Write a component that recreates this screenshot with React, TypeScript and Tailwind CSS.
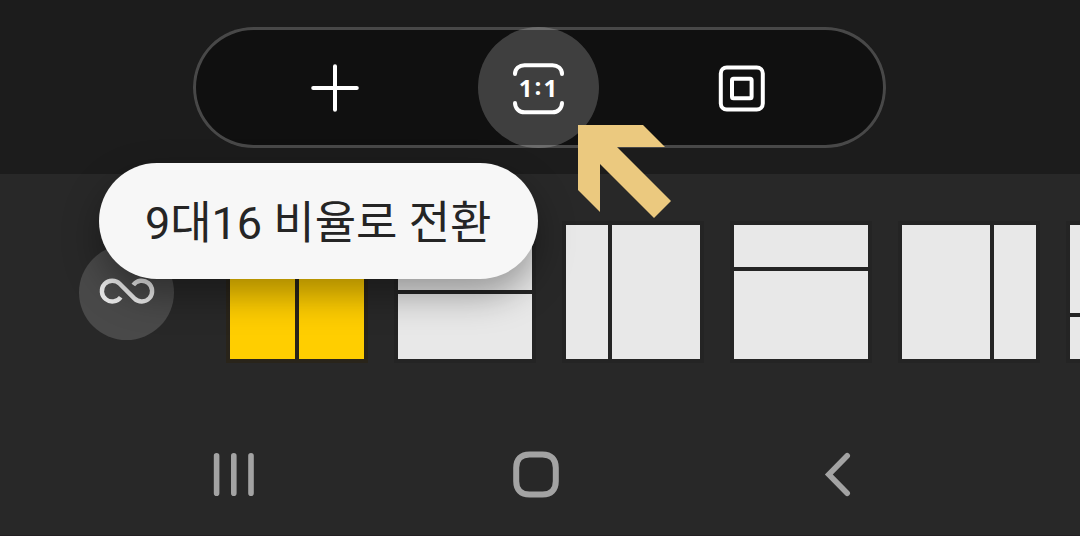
type Layout = {
  name: string;
  grid: string;
};

const layouts: Layout[] = [
  { name: "좌우 균등 분할", grid: "grid-cols-[1fr_1fr]" },
  { name: "상하 균등 분할", grid: "grid-rows-[1fr_1fr]" },
  { name: "좁은 왼쪽 분할", grid: "grid-cols-[42px_1fr]" },
  { name: "좁은 위쪽 분할", grid: "grid-rows-[42px_1fr]" },
  { name: "좁은 오른쪽 분할", grid: "grid-cols-[1fr_42px]" },
  { name: "좁은 아래쪽 분할", grid: "grid-rows-[1fr_42px]" },
];

function PlusIcon() {
  return (
    <svg className="size-14" viewBox="0 0 56 56" fill="none" stroke="white" strokeWidth="4" strokeLinecap="round" aria-hidden="true">
      <path d="M28 6.2V49.8M6.2 28H49.8" />
    </svg>
  );
}

function RatioFrame() {
  return (
    <svg className="size-14" viewBox="0 0 56 56" fill="none" stroke="white" strokeWidth="4" strokeLinecap="round" aria-hidden="true">
      <path d="M5 14C5 8.6 9.4 5.2 14.5 5.2H42.5C47.6 5.2 52 8.6 52 14" />
      <path d="M5 43C5 48.4 9.4 52.3 14.5 52.3H42.5C47.6 52.3 52 48.4 52 43" />
    </svg>
  );
}

function BorderIcon() {
  return (
    <svg className="size-14" viewBox="0 0 56 56" fill="none" stroke="white" strokeWidth="4" aria-hidden="true">
      <rect x="7.8" y="7.5" width="42" height="42" rx="6" />
      <rect x="19" y="18.7" width="19.6" height="19.6" rx="1.5" />
    </svg>
  );
}

function InfinityIcon() {
  return (
    <svg className="h-8 w-[60px]" viewBox="-30 -16 60 32" fill="none" stroke="#e8e8e8" strokeWidth="4.4" aria-hidden="true">
      <path d="M-6.3 5.2A10.4 10.4 0 1 1 -7.3 -8.2L7.3 6.4A10.4 10.4 0 1 0 6.3 -7" />
    </svg>
  );
}

export default function App() {
  return (
    <div className="flex min-h-screen flex-col overflow-hidden border-b border-[#231f22] bg-[#282828] font-['Roboto','Noto_Sans_CJK_KR',sans-serif]">
      <header className="relative z-10 flex justify-center bg-[#1c1c1c] pt-[27px] pr-0.5 pb-[26px]">
        <div className="flex w-[693px] max-w-full justify-evenly rounded-full bg-[#101010] pr-0.5 inset-ring-3 inset-ring-[#484848]">
          <button type="button" aria-label="추가" className="flex size-[121px] items-center justify-center rounded-full">
            <PlusIcon />
          </button>
          <div className="relative">
            <button
              type="button"
              aria-describedby="ratio-tip"
              className="relative flex size-[121px] items-center justify-center rounded-full bg-white/20 font-['Open_Sans',sans-serif] text-2xl leading-none font-bold text-white"
            >
              <RatioFrame />
              <span className="absolute inset-0 flex items-center justify-center gap-0.5">
                <span>1</span>
                <span className="pb-1">:</span>
                <span>1</span>
              </span>
            </button>
            <div
              id="ratio-tip"
              role="tooltip"
              className="absolute top-[136px] right-[61px] flex h-[116px] items-center rounded-full bg-[#f7f7f7] px-[46px] pt-1 text-[45px] leading-none whitespace-nowrap text-[#252525] shadow-[0_16px_36px_rgba(0,0,0,0.35)]"
            >
              9대16 비율로 전환
            </div>
            <svg className="absolute top-[98px] left-[100px] size-[93px]" viewBox="0 0 93 93" aria-hidden="true">
              <path fill="#ebc97f" d="M0 0H65L87 22H39L93 76L76 93L22 39V87L0 65Z" />
            </svg>
          </div>
          <button type="button" aria-label="테두리" className="flex size-[121px] items-center justify-center rounded-full">
            <BorderIcon />
          </button>
        </div>
      </header>

      <main className="flex items-center gap-[52px] overflow-hidden pt-[47px] pb-16 pl-[79px]">
        <button type="button" aria-label="자유 비율" className="flex size-[95px] shrink-0 items-center justify-center rounded-full bg-[#494949]">
          <InfinityIcon />
        </button>
        <div className="flex gap-[26px]">
          {layouts.map((layout, i) => (
            <button
              key={layout.name}
              type="button"
              aria-label={layout.name}
              aria-pressed={i === 0}
              className={`grid size-[142px] shrink-0 gap-1 p-1 ${layout.grid} ${
                i === 0 ? "bg-[#29241a] text-[#ffce00]" : "bg-[#242424] text-[#e8e8e8]"
              }`}
            >
              <span className="bg-current" />
              <span className="bg-current" />
            </button>
          ))}
        </div>
      </main>

      <nav className="flex justify-center pr-2 pb-3">
        <button type="button" aria-label="최근 앱" className="flex h-24 w-[28.2%] items-center justify-center">
          <svg className="size-12" viewBox="0 0 48 48" fill="none" stroke="#a3a3a3" strokeWidth="5.6" strokeLinecap="round" aria-hidden="true">
            <path d="M6.6 4.8V42.2M23.8 4.8V42.2M41 4.8V42.2" />
          </svg>
        </button>
        <button type="button" aria-label="홈" className="flex h-24 w-[28.2%] items-center justify-center">
          <svg className="size-12" viewBox="0 0 48 48" fill="none" stroke="#a3a3a3" strokeWidth="6" aria-hidden="true">
            <path d="M17.5 3.4H30.5C39 3.4 43.8 8.2 43.8 16.7V30.2C43.8 38.7 39 43.5 30.5 43.5H17.5C9 43.5 4.2 38.7 4.2 30.2V16.7C4.2 8.2 9 3.4 17.5 3.4Z" />
          </svg>
        </button>
        <button type="button" aria-label="뒤로" className="flex h-24 w-[28.2%] items-center justify-center">
          <svg className="size-12" viewBox="0 0 48 48" fill="none" stroke="#a3a3a3" strokeWidth="5.6" strokeLinecap="round" aria-hidden="true">
            <path d="M33.2 4.8L14.8 23.5L33.2 42.2" />
          </svg>
        </button>
      </nav>
    </div>
  );
}
